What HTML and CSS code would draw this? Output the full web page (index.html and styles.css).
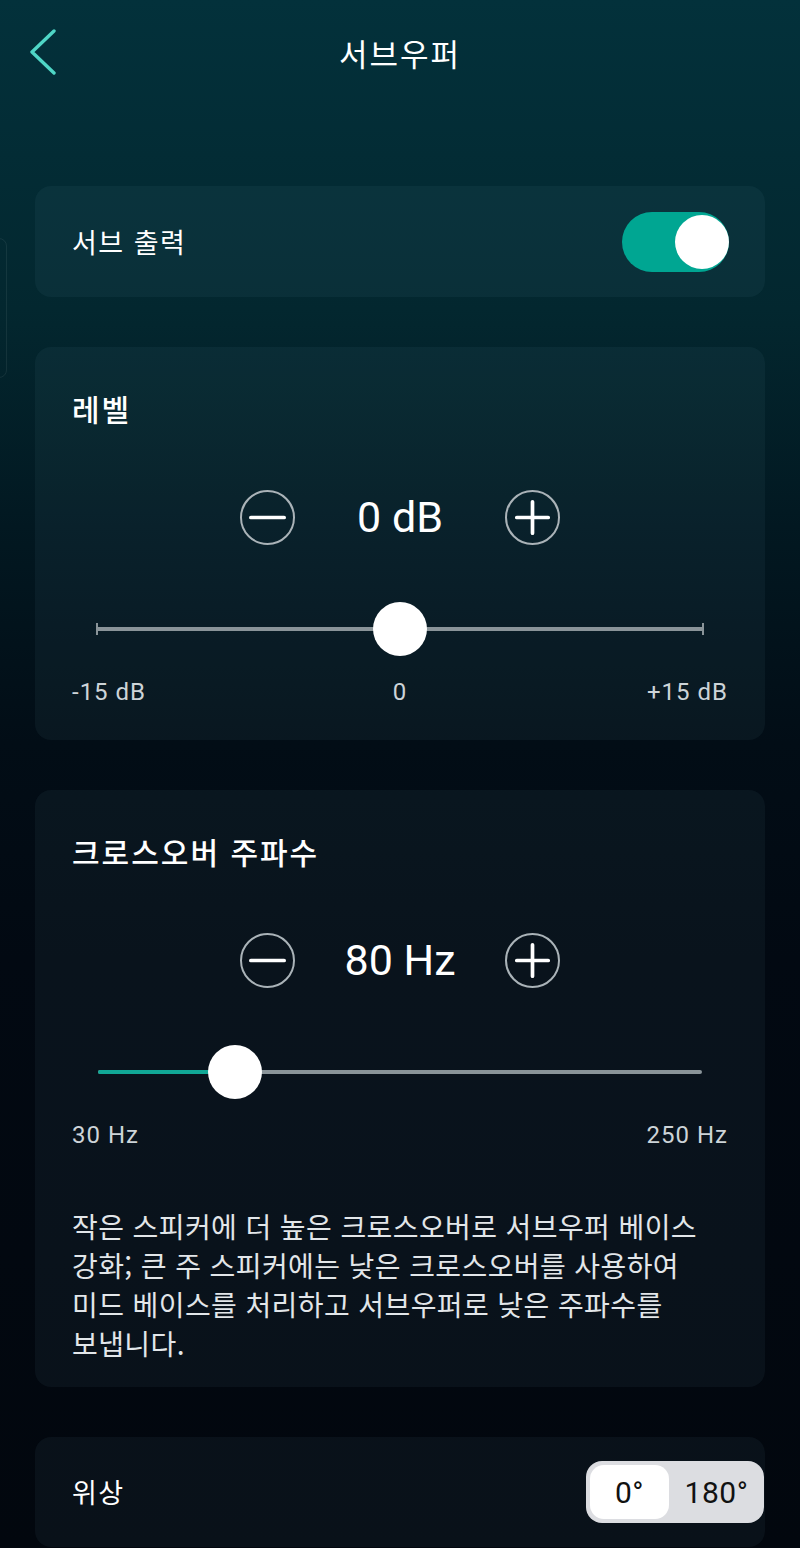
FILE: index.html
```html
<!DOCTYPE html>
<html lang="ko">
<head>
<meta charset="utf-8">
<title>서브우퍼</title>
<link rel="stylesheet" href="styles.css">
</head>
<body>
<div class="screen">
  <div class="edge-handle"></div>
  <header class="topbar">
    <button class="back" aria-label="뒤로">
      <svg width="30" height="48" viewBox="0 0 30 48"><path d="M24 2 L2 23 L24 44" fill="none" stroke="#4fd6c6" stroke-width="3.4" stroke-linecap="round" stroke-linejoin="round"/></svg>
    </button>
    <h1 class="title">서브우퍼</h1>
    <span class="spacer"></span>
  </header>

  <main class="content">
    <section class="card card-row">
      <span class="row-label">서브 출력</span>
      <div class="switch on"><span class="switch-knob"></span></div>
    </section>

    <section class="card card-block level">
      <h2 class="card-title">레벨</h2>
      <div class="stepper">
        <button class="step-btn" aria-label="감소"><svg width="40" height="40" viewBox="0 0 40 40"><path d="M2 20 H38" stroke="#fff" stroke-width="4" stroke-linecap="round"/></svg></button>
        <span class="step-value">0 dB</span>
        <button class="step-btn" aria-label="증가"><svg width="40" height="40" viewBox="0 0 40 40"><path d="M3 20 H37 M20 3 V37" stroke="#fff" stroke-width="4" stroke-linecap="round"/></svg></button>
      </div>
      <div class="slider slider-ticked">
        <div class="slider-track">
          <span class="slider-knob" style="left: 50%"></span>
        </div>
      </div>
      <div class="scale">
        <span class="scale-min">-15 dB</span>
        <span class="scale-mid">0</span>
        <span class="scale-max">+15 dB</span>
      </div>
    </section>

    <section class="card card-block crossover">
      <h2 class="card-title">크로스오버 주파수</h2>
      <div class="stepper">
        <button class="step-btn" aria-label="감소"><svg width="40" height="40" viewBox="0 0 40 40"><path d="M2 20 H38" stroke="#fff" stroke-width="4" stroke-linecap="round"/></svg></button>
        <span class="step-value">80 Hz</span>
        <button class="step-btn" aria-label="증가"><svg width="40" height="40" viewBox="0 0 40 40"><path d="M3 20 H37 M20 3 V37" stroke="#fff" stroke-width="4" stroke-linecap="round"/></svg></button>
      </div>
      <div class="slider slider-rounded">
        <div class="slider-track">
          <span class="slider-fill" style="width: 22.7%"></span>
          <span class="slider-knob" style="left: 22.7%"></span>
        </div>
      </div>
      <div class="scale">
        <span class="scale-min">30 Hz</span>
        <span class="scale-max">250 Hz</span>
      </div>
      <p class="description">작은 스피커에 더 높은 크로스오버로 서브우퍼 베이스 강화; 큰 주 스피커에는 낮은 크로스오버를 사용하여 미드 베이스를 처리하고 서브우퍼로 낮은 주파수를 보냅니다.</p>
    </section>

    <section class="card card-row phase">
      <span class="row-label">위상</span>
      <div class="segmented">
        <span class="segment active">0°</span>
        <span class="segment">180°</span>
      </div>
    </section>
  </main>
</div>
</body>
</html>
```

FILE: styles.css
```css
* {
  box-sizing: border-box;
}

html, body {
  margin: 0;
  padding: 0;
}

body {
  font-family: Roboto, "Noto Sans CJK KR", sans-serif;
  color: #ffffff;
  background: #02070e;
}

.screen {
  position: relative;
  width: 800px;
  min-height: 1548px;
  overflow: hidden;
  background: linear-gradient(180deg, #03313b 0%, #03272f 20%, #021821 34%, #020d16 48%, #020912 62%, #02070e 100%);
}

.edge-handle {
  position: absolute;
  left: -10px;
  top: 238px;
  width: 17px;
  height: 140px;
  border: 1px solid rgba(255, 255, 255, 0.07);
  border-radius: 8px;
}

.topbar {
  display: grid;
  grid-template-columns: 1fr auto 1fr;
  align-items: center;
  height: 106px;
}

.back {
  justify-self: start;
  display: flex;
  padding: 0 0 0 30px;
  margin: 0;
  border: 0;
  background: none;
  cursor: pointer;
}

.title {
  margin: 0;
  font-family: "Noto Sans CJK KR", sans-serif;
  font-size: 31px;
  font-weight: 400;
  letter-spacing: 2px;
  line-height: 40px;
  color: #ffffff;
}

.content {
  display: flex;
  flex-direction: column;
  gap: 50px;
  padding: 80px 35px 0;
}

.card {
  border-radius: 16px;
  background: rgba(130, 185, 205, 0.06);
}

.card-row {
  display: flex;
  align-items: center;
  justify-content: space-between;
  height: 111px;
  padding: 0 36px 0 37px;
}

.row-label {
  font-family: "Noto Sans CJK KR", sans-serif;
  font-size: 27px;
  font-weight: 400;
  letter-spacing: 1.5px;
  line-height: 36px;
}

.switch {
  display: flex;
  align-items: center;
  width: 107px;
  height: 60px;
  padding: 3px 0 3px 3px;
  border-radius: 30px;
  background: #00a692;
}

.switch-knob {
  width: 54px;
  height: 54px;
  margin-left: auto;
  border-radius: 50%;
  background: #ffffff;
}

.card-block {
  display: flex;
  flex-direction: column;
  padding: 41px 37px 0;
}

.level {
  padding-bottom: 33px;
}

.crossover {
  padding-bottom: 24px;
}

.card-title {
  margin: 0;
  font-family: "Noto Sans CJK KR", sans-serif;
  font-size: 30px;
  font-weight: 500;
  letter-spacing: 2px;
  line-height: 40px;
}

.stepper {
  display: flex;
  align-items: center;
  justify-content: center;
  margin-top: 62px;
  height: 54px;
}

.step-btn {
  display: flex;
  align-items: center;
  justify-content: center;
  width: 55px;
  height: 55px;
  padding: 0;
  border: 2px solid #aab3b8;
  border-radius: 50%;
  background: transparent;
}

.step-btn svg {
  width: 37px;
  height: 37px;
}

.step-value {
  width: 210px;
  text-align: center;
  font-size: 43px;
  line-height: 54px;
  font-weight: 400;
}

.slider {
  display: flex;
  align-items: center;
  height: 54px;
  margin-top: 58px;
}

.slider-ticked {
  margin-left: 24px;
  margin-right: 24px;
}

.slider-rounded {
  margin-left: 26px;
  margin-right: 26px;
}

.slider-track {
  position: relative;
  flex: 1;
  height: 4px;
  background: #8a9499;
}

.slider-rounded .slider-track {
  border-radius: 2px;
}

.slider-ticked .slider-track::before,
.slider-ticked .slider-track::after {
  content: "";
  position: absolute;
  top: -4px;
  width: 2px;
  height: 12px;
  background: #8a9499;
}

.slider-ticked .slider-track::before {
  left: 0;
}

.slider-ticked .slider-track::after {
  right: 0;
}

.slider-fill {
  position: absolute;
  left: 0;
  top: 0;
  height: 4px;
  border-radius: 2px;
  background: #11a896;
}

.slider-knob {
  position: absolute;
  top: 50%;
  width: 54px;
  height: 54px;
  border-radius: 50%;
  background: #ffffff;
  transform: translate(-50%, -50%);
}

.scale {
  display: flex;
  justify-content: space-between;
  margin-top: 21px;
  font-size: 24px;
  letter-spacing: 1px;
  line-height: 30px;
  color: #cdd4d8;
}

.scale span {
  flex: 1;
}

.scale-mid {
  text-align: center;
}

.scale-max {
  text-align: right;
}

.description {
  max-width: 656px;
  margin: 57px 0 0;
  font-family: "Noto Sans CJK KR", sans-serif;
  font-size: 28px;
  letter-spacing: 0.4px;
  line-height: 39px;
  word-break: keep-all;
  color: #e2e6e9;
}

.phase {
  height: 110px;
  padding-right: 1px;
}

.segmented {
  display: flex;
  align-items: center;
  width: 178px;
  height: 62px;
  padding: 4px;
  border-radius: 16px;
  background: #dcdde1;
}

.segment {
  display: flex;
  align-items: center;
  justify-content: center;
  height: 54px;
  font-size: 30px;
  letter-spacing: 0.5px;
  color: #111111;
}

.segment.active {
  width: 79px;
  border-radius: 14px;
  background: #ffffff;
}

.segment:not(.active) {
  flex: 1;
  padding-left: 4px;
}
```
